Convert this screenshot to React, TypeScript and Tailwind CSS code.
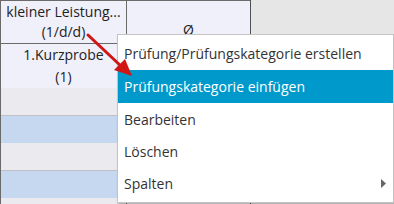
import React from "react";

export default function App() {
  const font = { fontFamily: '"Open Sans", "Noto Sans", sans-serif' };
  return (
    <div className="relative w-[394px] h-[204px] overflow-hidden bg-[#e6e6e6]" style={font}>
      <div className="flex h-full">
        {/* column 1 */}
        <div className="w-[126px] flex flex-col border-l border-t border-[#6a6a6a]">
          <div className="h-[43px] bg-[#f0f0fb] border-b border-[#6a6a6a] flex flex-col items-center justify-center text-[14px] leading-[20px] text-[#222]">
            <span>kleiner Leistung...</span>
            <span>(1/d/d)</span>
          </div>
          <div className="h-[44px] bg-[#f0f0fb] flex flex-col items-center justify-center text-[14px] leading-[22px] text-[#222]">
            <span>1.Kurzprobe</span>
            <span>(1)</span>
          </div>
          <div className="h-[28px] bg-[#ebebef] border-b border-[#c0c0c8]" />
          <div className="h-[27px] bg-[#c6d7f0]" />
          <div className="h-[28px] bg-[#ebebef] border-b border-[#c0c0c8]" />
          <div className="h-[27px] bg-[#c6d7f0]" />
          <div className="flex-1 bg-[#ebebef]" />
        </div>
        {/* column 2 */}
        <div className="w-[124px] flex flex-col border-l border-t border-[#6a6a6a]">
          <div className="h-[87px] bg-[#f0f0fb] flex justify-center pt-[18px] text-[14px] text-[#222]">
            <span>Ø</span>
          </div>
          <div className="h-[28px] bg-[#ebebef]" />
          <div className="h-[27px] bg-[#c6d7f0]" />
          <div className="h-[28px] bg-[#ebebef]" />
          <div className="h-[27px] bg-[#c6d7f0]" />
          <div className="flex-1 bg-[#ebebef]" />
        </div>
        <div className="flex-1 border-l border-[#505050] bg-[#e6e6e6]" />
      </div>

      {/* context menu */}
      <div className="absolute left-[117px] top-[34px] w-[277px] h-[169px] bg-white border border-[#c4c4c4] shadow-[1px_2px_2px_rgba(0,0,0,0.25)] pt-[2px] text-[14px] text-[#333]">
        <div className="h-[33px] flex items-center pl-[6px]">Prüfung/Prüfungskategorie erstellen</div>
        <div className="h-[33px] flex items-center pl-[6px] bg-[#0099cc] text-white">Prüfungskategorie einfügen</div>
        <div className="h-[32px] flex items-center pl-[6px]">Bearbeiten</div>
        <div className="h-[32px] flex items-center pl-[6px]">Löschen</div>
        <div className="h-[32px] flex items-center pl-[6px] justify-between pr-[7px]">
          <span>Spalten</span>
          <svg width="5" height="9" viewBox="0 0 5 9"><polygon points="0,0 5,4.5 0,9" fill="#666" /></svg>
        </div>
      </div>

      {/* red arrow */}
      <svg className="absolute left-0 top-0 pointer-events-none" width="394" height="204">
        <line x1="88" y1="35" x2="122" y2="67" stroke="#d01515" strokeWidth="3" strokeLinecap="round" />
        <polygon points="132,76 114,70 125,59" fill="#d01515" />
      </svg>
    </div>
  );
}
